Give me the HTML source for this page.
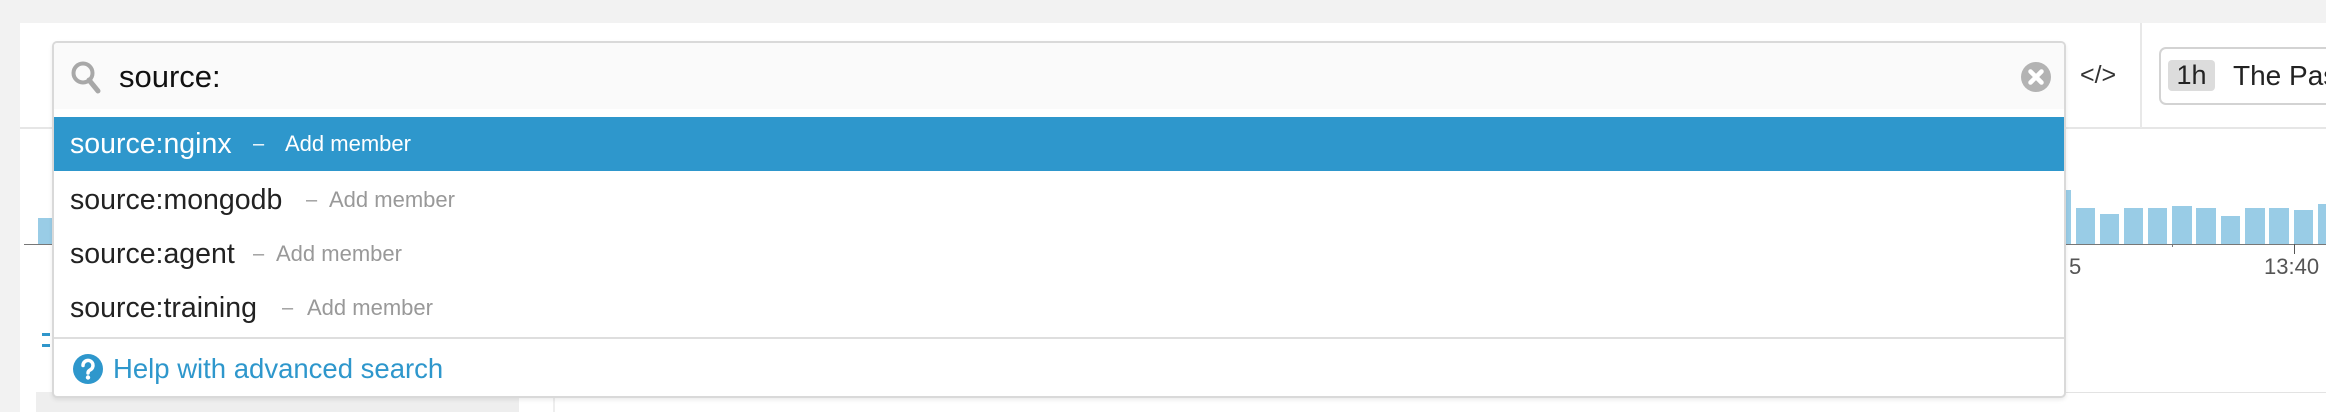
<!DOCTYPE html>
<html><head><meta charset="utf-8"><style>
*{margin:0;padding:0;box-sizing:border-box}
body{width:2326px;height:412px;overflow:hidden;background:#f2f2f2;font-family:"Liberation Sans",sans-serif;position:relative}
.a{position:absolute}
.sx{display:inline-block;white-space:nowrap}
</style></head><body>
<div class="a" style="left:20px;top:23px;width:2306px;height:389px;background:#fff"></div>
<div class="a" style="left:20px;top:127px;width:2306px;height:2px;background:#e6e6e6"></div>
<div class="a" style="left:2140px;top:23px;width:2px;height:105px;background:#e8e8e8"></div>
<div class="a" style="left:2159px;top:47px;width:200px;height:58px;border:2px solid #d3d3d3;border-radius:7px"></div>
<div class="a" style="left:2168px;top:60px;width:47px;height:31px;background:#dcdcdc;border-radius:4px;font-size:27px;line-height:31px;text-align:center;color:#222">1h</div>
<div class="a" style="left:2233px;top:59px;font-size:28px;line-height:34px;color:#222;white-space:nowrap">The Past</div>
<div class="a" style="left:2080px;top:58px;font-size:25px;line-height:34px;color:#333">&lt;/&gt;</div>
<div class="a" style="left:38px;top:218px;width:16px;height:26px;background:#99cce6"></div>
<div class="a" style="left:24px;top:244px;width:30px;height:1px;background:#777"></div>
<div class="a" style="left:2064px;top:244px;width:262px;height:1px;background:#777"></div>
<div class="a" style="left:2172px;top:244px;width:1px;height:3px;background:#777"></div>
<div class="a" style="left:2294px;top:244px;width:1px;height:10px;background:#555"></div>
<div class="a" style="left:2066px;top:190px;width:5px;height:54px;background:#99cce6"></div>
<div class="a" style="left:2076px;top:208px;width:19px;height:36px;background:#99cce6"></div>
<div class="a" style="left:2100px;top:214px;width:19px;height:30px;background:#99cce6"></div>
<div class="a" style="left:2124px;top:208px;width:19px;height:36px;background:#99cce6"></div>
<div class="a" style="left:2148px;top:208px;width:19px;height:36px;background:#99cce6"></div>
<div class="a" style="left:2172px;top:206px;width:20px;height:38px;background:#99cce6"></div>
<div class="a" style="left:2196px;top:208px;width:20px;height:36px;background:#99cce6"></div>
<div class="a" style="left:2221px;top:216px;width:19px;height:28px;background:#99cce6"></div>
<div class="a" style="left:2245px;top:208px;width:20px;height:36px;background:#99cce6"></div>
<div class="a" style="left:2269px;top:208px;width:20px;height:36px;background:#99cce6"></div>
<div class="a" style="left:2294px;top:210px;width:19px;height:34px;background:#99cce6"></div>
<div class="a" style="left:2318px;top:204px;width:8px;height:40px;background:#99cce6"></div>
<div class="a" style="left:2069px;top:254px;font-size:22px;color:#555">5</div>
<div class="a" style="left:2264px;top:254px;font-size:22px;color:#555">13:40</div>
<div class="a" style="left:2064px;top:392px;width:262px;height:1px;background:#e3e3e3"></div>
<div class="a" style="left:36px;top:392px;width:483px;height:20px;background:#eee"></div>
<div class="a" style="left:553px;top:398px;width:2px;height:14px;background:#eee"></div>
<div class="a" style="left:42px;top:333px;width:8px;height:3px;background:#2f96cb"></div>
<div class="a" style="left:42px;top:344px;width:8px;height:3px;background:#2f96cb"></div>
<div class="a" style="left:52px;top:41px;width:2014px;height:357px;border:2px solid #d9d9d9;border-radius:5px;background:#fff;box-shadow:0 2px 4px rgba(0,0,0,.08);overflow:hidden">
  <div class="a" style="left:0;top:0;width:2010px;height:66px;background:#fafafa"></div>
  <svg class="a" style="left:14px;top:17px" width="36" height="36" viewBox="0 0 36 36"><circle cx="15" cy="13" r="9.5" fill="none" stroke="#a8a8a8" stroke-width="4"/><line x1="21" y1="20" x2="30" y2="31" stroke="#a8a8a8" stroke-width="5" stroke-linecap="round"/></svg>
  <div class="a" style="left:65px;top:14px;font-size:31px;line-height:40px;color:#111">source:</div>
  <svg class="a" style="left:1966px;top:18px" width="32" height="32" viewBox="0 0 32 32"><circle cx="16" cy="16" r="15" fill="#b3b3b3"/><path d="M10.5 10.5L21.5 21.5M21.5 10.5L10.5 21.5" stroke="#fff" stroke-width="4.5" stroke-linecap="round"/></svg>
  <div class="a" style="left:0;top:74px;width:2010px;height:54px;background:#2e97cc"></div>
  <div class="a" style="left:16px;top:74px;line-height:54px;font-size:28.5px;color:#fff;white-space:nowrap">source:nginx</div>
  <div class="a" style="left:199px;top:74px;line-height:54px;font-size:20px;color:#fff">–</div>
  <div class="a" style="left:231px;top:74px;line-height:54px;font-size:22px;color:#fff"><span class="sx">Add member</span></div>
  <div class="a" style="left:16px;top:130px;line-height:54px;font-size:28.5px;color:#222;white-space:nowrap">source:mongodb</div>
  <div class="a" style="left:252px;top:130px;line-height:54px;font-size:20px;color:#999">–</div>
  <div class="a" style="left:275px;top:130px;line-height:54px;font-size:22px;color:#999"><span class="sx">Add member</span></div>
  <div class="a" style="left:16px;top:184px;line-height:54px;font-size:28.5px;color:#222;white-space:nowrap">source:agent</div>
  <div class="a" style="left:199px;top:184px;line-height:54px;font-size:20px;color:#999">–</div>
  <div class="a" style="left:222px;top:184px;line-height:54px;font-size:22px;color:#999"><span class="sx">Add member</span></div>
  <div class="a" style="left:16px;top:238px;line-height:54px;font-size:28.5px;color:#222;white-space:nowrap">source:training</div>
  <div class="a" style="left:228px;top:238px;line-height:54px;font-size:20px;color:#999">–</div>
  <div class="a" style="left:253px;top:238px;line-height:54px;font-size:22px;color:#999"><span class="sx">Add member</span></div>
  <div class="a" style="left:0;top:294px;width:2010px;height:2px;background:#dedede"></div>
  <svg class="a" style="left:18px;top:310px" width="32" height="32" viewBox="0 0 32 32"><circle cx="16" cy="16" r="15" fill="#2e97cc"/><path d="M11 12.5a5 5 0 1 1 7 4.5c-1.5.8-2 1.5-2 3" fill="none" stroke="#fff" stroke-width="3.5" stroke-linecap="round"/><circle cx="16" cy="24.5" r="2.2" fill="#fff"/></svg>
  <div class="a" style="left:59px;top:307px;line-height:38px;font-size:27.5px;color:#2e97cc;white-space:nowrap">Help with advanced search</div>
</div>
</body></html>
